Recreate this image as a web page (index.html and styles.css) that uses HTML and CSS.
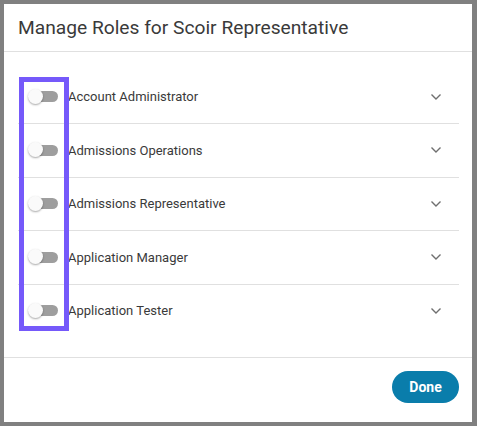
FILE: index.html
```html
<!DOCTYPE html>
<html>
<head>
<meta charset="utf-8">
<link rel="stylesheet" href="styles.css">
</head>
<body>
<div class="dialog">
  <div class="header"><h1 class="title">Manage Roles for Scoir Representative</h1></div>
  <div class="body">
    <div class="list">
      <div class="row"><span class="toggle"><span class="track"></span><span class="thumb"></span></span><span class="label">Account Administrator</span><svg class="chev" viewBox="0 0 12 8" width="12" height="8"><path d="M1.5 1.5 L6 6 L10.5 1.5" fill="none" stroke="#6f6f6f" stroke-width="1.4"/></svg></div>
      <div class="row"><span class="toggle"><span class="track"></span><span class="thumb"></span></span><span class="label">Admissions Operations</span><svg class="chev" viewBox="0 0 12 8" width="12" height="8"><path d="M1.5 1.5 L6 6 L10.5 1.5" fill="none" stroke="#6f6f6f" stroke-width="1.4"/></svg></div>
      <div class="row"><span class="toggle"><span class="track"></span><span class="thumb"></span></span><span class="label">Admissions Representative</span><svg class="chev" viewBox="0 0 12 8" width="12" height="8"><path d="M1.5 1.5 L6 6 L10.5 1.5" fill="none" stroke="#6f6f6f" stroke-width="1.4"/></svg></div>
      <div class="row"><span class="toggle"><span class="track"></span><span class="thumb"></span></span><span class="label">Application Manager</span><svg class="chev" viewBox="0 0 12 8" width="12" height="8"><path d="M1.5 1.5 L6 6 L10.5 1.5" fill="none" stroke="#6f6f6f" stroke-width="1.4"/></svg></div>
      <div class="row last"><span class="toggle"><span class="track"></span><span class="thumb"></span></span><span class="label">Application Tester</span><svg class="chev" viewBox="0 0 12 8" width="12" height="8"><path d="M1.5 1.5 L6 6 L10.5 1.5" fill="none" stroke="#6f6f6f" stroke-width="1.4"/></svg></div>
      <div class="highlight"></div>
    </div>
  </div>
  <div class="footer"><button class="done">Done</button></div>
</div>
</body>
</html>
```
FILE: styles.css
```css
html, body {
  margin: 0;
  padding: 0;
  background: #808080;
}
body {
  padding: 4px 5px 4px 4px;
  font-family: Roboto, "Liberation Sans", sans-serif;
}
.dialog {
  background: #fff;
  height: 418px;
  display: flex;
  flex-direction: column;
}
.header {
  height: 47px;
  border-bottom: 1px solid #e0e0e0;
  display: flex;
  align-items: center;
  padding-left: 14px;
}
.title {
  margin: 0;
  font-size: 19.2px;
  font-weight: 400;
  color: #3a3a3a;
}
.body {
  padding: 18.5px 13px 19.5px 14px;
}
.list {
  position: relative;
}
.row {
  height: 52.5px;
  border-bottom: 1px solid #e0e0e0;
  display: flex;
  align-items: center;
  padding-left: 10px;
}
.row.last {
  border-bottom: none;
}
.toggle {
  position: relative;
  width: 30px;
  height: 16px;
  flex: none;
}
.track {
  position: absolute;
  left: 3px;
  top: 2.5px;
  width: 27px;
  height: 11px;
  border-radius: 6px;
  background: #9e9e9e;
}
.thumb {
  position: absolute;
  left: 0;
  top: 0;
  width: 15px;
  height: 15px;
  border-radius: 50%;
  background: #fafafa;
  box-shadow: 0 1px 2px rgba(0,0,0,0.35);
}
.label {
  margin-left: 10px;
  font-size: 13px;
  color: #3a3a3a;
  flex: 1;
}
.chev {
  margin-right: 17px;
}
.highlight {
  position: absolute;
  left: 1px;
  top: 6px;
  width: 40px;
  height: 244px;
  border: 5px solid #7559fa;
  pointer-events: none;
}
.footer {
  flex: 1;
  border-top: 1px solid #e0e0e0;
  display: flex;
  justify-content: flex-end;
  align-items: flex-start;
  padding: 13px 13px 0 0;
}
.done {
  width: 67px;
  height: 32px;
  border: none;
  border-radius: 16px;
  background: #0a7dab;
  color: #fff;
  font-family: Roboto, "Liberation Sans", sans-serif;
  font-weight: 700;
  font-size: 14px;
  padding: 0;
}
```
